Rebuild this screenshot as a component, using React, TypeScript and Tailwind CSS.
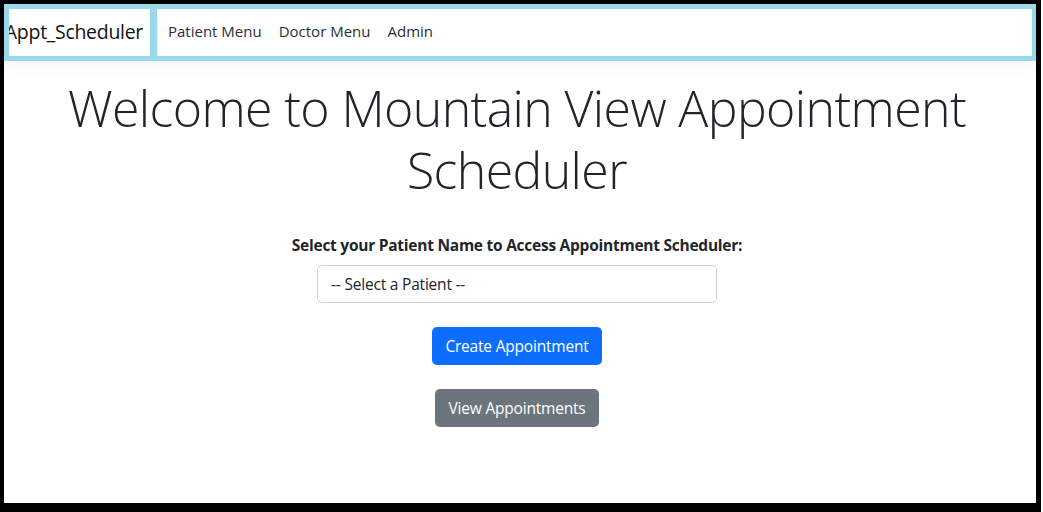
import { useState } from 'react';

const patients = ['-- Select a Patient --'];

export default function App() {
    const [patient, setPatient] = useState(patients[0]);

    return (
        <div className="h-[512px] w-[1043px] bg-white">
            <div
                className="box-border flex h-[512px] w-[1041px] flex-col border-t-4 border-r-[5px] border-b-[9px] border-l-4 border-black bg-white text-[#212529]"
                style={{ fontFamily: '"Open Sans", "Noto Sans", sans-serif' }}
            >
                {/* Navbar */}
                <nav className="flex h-[57px] shrink-0 border-t-[5px] border-r-4 border-b-[5px] border-l-[5px] border-[#99d9ea] bg-[#99d9ea] shadow-[0_6px_14px_rgba(0,0,0,0.035)]">
                    <a
                        href="#"
                        className="flex w-[141px] shrink-0 items-center justify-end overflow-hidden pr-[7px] pb-[2px] whitespace-nowrap bg-white text-[19.5px] tracking-[-0.3px] text-[#111]"
                    >
                        Appt_Scheduler
                    </a>
                    <div className="ml-[7px] flex flex-1 items-center gap-[17px] bg-white pb-[3px] pl-[11px] text-[15px] text-[#2b2f36]">
                        <a href="#">Patient Menu</a>
                        <a href="#">Doctor Menu</a>
                        <a href="#">Admin</a>
                    </div>
                </nav>

                {/* Main */}
                <main className="flex flex-col items-center pr-[6px]">
                    <h1 className="mt-[16px] text-center text-[50px] leading-[62px] font-light tracking-[-0.6px]">
                        Welcome to Mountain View Appointment
                        <br />
                        Scheduler
                    </h1>

                    <label htmlFor="patient" className="mt-[33px] text-[15.5px] font-bold tracking-[-0.25px]">
                        Select your Patient Name to Access Appointment Scheduler:
                    </label>
                    <select
                        id="patient"
                        value={patient}
                        onChange={(e) => setPatient(e.target.value)}
                        className="mt-[8px] h-[38px] w-[400px] appearance-none rounded-[5px] border border-[#ced4da] bg-white px-[13px] text-[15.5px] tracking-[-0.2px] text-[#212529]"
                    >
                        {patients.map((p) => (
                            <option key={p}>{p}</option>
                        ))}
                    </select>

                    <button
                        type="button"
                        className="mt-[24px] h-[38px] rounded-[5px] bg-[#0d6efd] px-[13px] text-[15.5px] tracking-[-0.2px] text-white"
                    >
                        Create Appointment
                    </button>
                    <button
                        type="button"
                        className="mt-[24px] h-[38px] rounded-[5px] bg-[#6c757d] px-[13px] text-[15.5px] tracking-[-0.2px] text-white"
                    >
                        View Appointments
                    </button>
                </main>
            </div>
        </div>
    );
}
